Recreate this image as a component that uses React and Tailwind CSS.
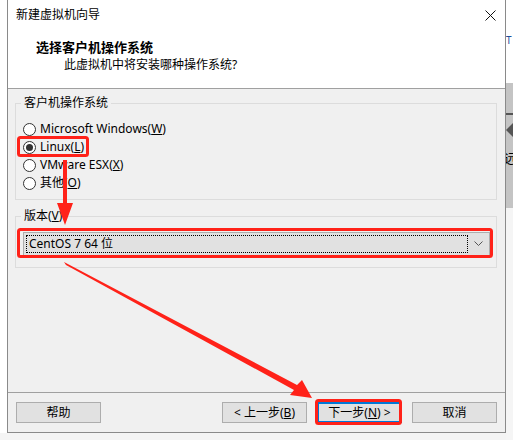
import React from 'react';

const radios = [
  { label: 'Microsoft Windows(', key: 'W', checked: false },
  { label: 'Linux(', key: 'L', checked: true },
  { label: 'VMware ESX(', key: 'X', checked: false },
  { label: '其他(', key: 'O', checked: false },
];

function Radio({ label, hotkey, checked }) {
  return (
    <div className="flex items-center h-[18px] gap-[4px]">
      <span className="w-[13px] h-[13px] rounded-full border border-[#333] bg-white flex items-center justify-center">
        {checked && <span className="w-[7px] h-[7px] rounded-full bg-[#333]" />}
      </span>
      <span className="leading-[18px]">
        {label}<u>{hotkey}</u>)
      </span>
    </div>
  );
}

function Button({ children, primary }) {
  return (
    <button
      className={
        'w-[85px] h-[21px] bg-[#e1e1e1] flex items-center justify-center leading-[18px] ' +
        (primary ? 'border-2 border-[#0078d7]' : 'border border-[#adadad]')
      }
    >
      {children}
    </button>
  );
}

export default function App() {
  return (
    <div className="relative w-[513px] h-[440px] overflow-hidden bg-[#f4f4f4] flex items-start font-['Noto_Sans','Noto_Sans_CJK_SC',sans-serif] text-[12px] text-black">
      {/* left strip */}
      <div className="w-[7px] h-[433px] shrink-0 bg-white" />

      {/* dialog */}
      <div className="w-[499px] h-[433px] shrink-0 flex flex-col border-x border-b border-[#8a8a8a] bg-[#f0f0f0]">
        {/* title bar */}
        <div className="h-[30px] bg-white flex items-center justify-between pl-[8px] pr-[9px]">
          <span className="leading-[18px]">新建虚拟机向导</span>
          <svg width="11" height="11" viewBox="0 0 11 11">
            <path d="M0.5 0.5 L10.5 10.5 M10.5 0.5 L0.5 10.5" stroke="#111" strokeWidth="1" />
          </svg>
        </div>

        {/* header */}
        <div className="h-[58px] bg-white pt-[8px]">
          <div className="pl-[28px] text-[13px] font-bold leading-[18px]">选择客户机操作系统</div>
          <div className="pl-[56px] leading-[18px]">此虚拟机中将安装哪种操作系统?</div>
        </div>
        <div className="h-px bg-[#a0a0a0]" />

        {/* body */}
        <div className="flex-1 pl-[7px] pr-[8px] pt-[5px]">
          <fieldset className="border border-[#dcdcdc] pl-[5px] pr-[6px] pt-[8px] pb-[7px]">
            <legend className="px-[3px] leading-[18px]">客户机操作系统</legend>
            <div className="ml-[2px]">
              {radios.map((r) => (
                <Radio key={r.key} label={r.label} hotkey={r.key} checked={r.checked} />
              ))}
            </div>
          </fieldset>

          <fieldset className="mt-[7px] border border-[#dcdcdc] pl-[5px] pr-[6px] pt-[7px] pb-[11px]">
            <legend className="px-[3px] leading-[18px]">
              版本(<u>V</u>)
            </legend>
            <div className="ml-[2px] h-[24px] bg-[#e1e1e1] border border-[#adadad] flex items-center pl-[2px] pr-[6px]">
              <div className="flex-1 h-[18px] border border-dotted border-black flex items-center pl-[2px]">
                <span className="leading-[16px]">CentOS 7 64 位</span>
              </div>
              <svg className="ml-[6px]" width="9" height="6" viewBox="0 0 9 6">
                <path d="M0.5 0.5 L4.5 4.5 L8.5 0.5" stroke="#555" strokeWidth="1" fill="none" />
              </svg>
            </div>
          </fieldset>
        </div>

        <div className="h-px bg-[#a0a0a0]" />
        {/* buttons */}
        <div className="h-[39px] flex items-start justify-between pl-[8px] pr-[8px] pt-[9px]">
          <Button>帮助</Button>
          <div className="flex gap-[10px]">
            <Button>&lt; 上一步(<u>B</u>)</Button>
            <Button primary>
              下一步(<u>N</u>) &gt;
            </Button>
            <Button>取消</Button>
          </div>
        </div>
      </div>

      {/* right strip: window behind */}
      <div className="w-[7px] h-[440px] shrink-0 flex flex-col overflow-hidden">
        <div className="h-[83px] bg-white pt-[34px] text-[#1f4e9a] text-[10px] leading-[12px]">T</div>
        <div className="h-[125px] bg-[#c4c4c4] flex flex-col pt-[30px]">
          <div className="h-[2px] w-[7px] bg-[#555]" />
          <div className="mt-[8px] w-0 h-0 border-y-[7px] border-y-transparent border-r-[7px] border-r-[#555]" />
          <div className="mt-[14px] -ml-[2px] text-[13px] leading-[14px] text-black">远</div>
        </div>
        <div className="flex-1 bg-[#f5f5f5]" />
      </div>

      {/* red annotations */}
      <svg className="absolute inset-0 pointer-events-none" width="513" height="440" viewBox="0 0 513 440">
        <g fill="none" stroke="#ff2219" strokeWidth="3">
          <rect x="18.5" y="137.5" width="69" height="18" rx="2" />
          <rect x="18.5" y="229.5" width="473" height="27" rx="2" />
          <rect x="316.5" y="400.5" width="84" height="23" rx="2" />
        </g>
        <g fill="#ff2219">
          <polygon points="63,160 67,160 67,203 73,203 65,225 57,203 63,203" />
          <polygon points="64,262 297,385 302,380 312,398 290,395 294,390 66,265" />
        </g>
      </svg>
    </div>
  );
}
